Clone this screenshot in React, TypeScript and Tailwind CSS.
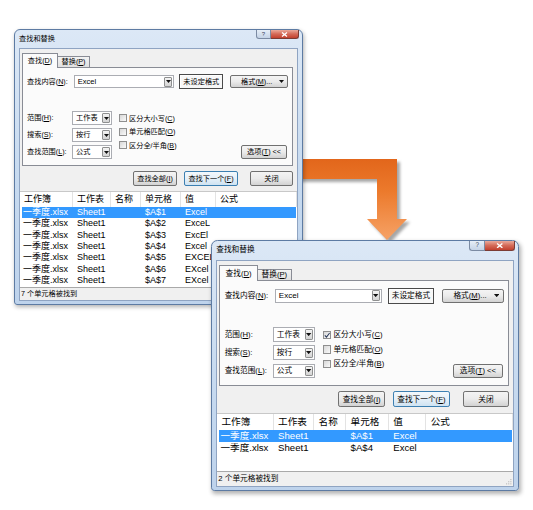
import React from "react";

type Row = { book: string; sheet: string; cell: string; value: string };

const rowsA: Row[] = [
  { book: "一季度.xlsx", sheet: "Sheet1", cell: "$A$1", value: "Excel" },
  { book: "一季度.xlsx", sheet: "Sheet1", cell: "$A$2", value: "ExceL" },
  { book: "一季度.xlsx", sheet: "Sheet1", cell: "$A$3", value: "ExcEl" },
  { book: "一季度.xlsx", sheet: "Sheet1", cell: "$A$4", value: "Excel" },
  { book: "一季度.xlsx", sheet: "Sheet1", cell: "$A$5", value: "EXCEL" },
  { book: "一季度.xlsx", sheet: "Sheet1", cell: "$A$6", value: "EXcel" },
  { book: "一季度.xlsx", sheet: "Sheet1", cell: "$A$7", value: "EXcel" },
];

const rowsB: Row[] = [
  { book: "一季度.xlsx", sheet: "Sheet1", cell: "$A$1", value: "Excel" },
  { book: "一季度.xlsx", sheet: "Sheet1", cell: "$A$4", value: "Excel" },
];

const headers = ["工作簿", "工作表", "名称", "单元格", "值", "公式"];
const headCols = ["w-[53px]", "w-[38px]", "w-[30px]", "w-[40px]", "w-[35px]", "flex-1"];

function K({ k }: { k: string }) {
  return <span className="underline underline-offset-[1px]">{k}</span>;
}

function Tri() {
  return (
    <svg width="5" height="3" viewBox="0 0 5 3">
      <path d="M0 0H5L2.5 3Z" fill="#111" />
    </svg>
  );
}

function DropBtn() {
  return (
    <div className="mr-[1px] flex h-[10px] w-[8px] items-center justify-center rounded-[1px] border border-[#8e8f8f] bg-gradient-to-b from-[#f4f4f4] to-[#d3d3d3]">
      <Tri />
    </div>
  );
}

function Select({ text }: { text: string }) {
  return (
    <div className="flex h-[14px] w-[40px] items-center border border-[#abadb3] bg-white">
      <span className="flex-1 pl-[3px] text-[7.2px] leading-none">{text}</span>
      <DropBtn />
    </div>
  );
}

function Btn({ children, className, primary }: { children: React.ReactNode; className: string; primary?: boolean }) {
  return (
    <div
      className={`flex items-center justify-center rounded-[2px] border text-[7.2px] leading-none ${
        primary
          ? "border-[#3c7fb1] bg-gradient-to-b from-[#f3f8fc] via-[#e6f0f8] to-[#cfe3f2]"
          : "border-[#707070] bg-gradient-to-b from-[#f4f4f4] via-[#ebebeb] to-[#d2d2d2]"
      } ${className}`}
    >
      {children}
    </div>
  );
}

function Check({ checked, children }: { checked?: boolean; children: React.ReactNode }) {
  return (
    <div className="flex h-[13.5px] items-center gap-[2px]">
      <div className="flex h-[8px] w-[8px] items-center justify-center border border-[#8f8f8f] bg-gradient-to-br from-[#d8d8d8] to-[#fafafa]">
        {checked && (
          <svg width="6" height="6" viewBox="0 0 6 6">
            <path d="M0.8 3.2 L2.3 4.8 L5.3 0.9" stroke="#2a3a5a" strokeWidth="1" fill="none" />
          </svg>
        )}
      </div>
      <span className="text-[7.2px] leading-none">{children}</span>
    </div>
  );
}

function Dialog({ rows, height, listHeight, firstChecked, grip }: { rows: Row[]; height: string; listHeight: string; firstChecked?: boolean; grip?: boolean }) {
  return (
    <div
      className={`flex w-[289px] flex-col rounded-t-[6px] rounded-b-[3px] border border-[#5d7ba3] bg-gradient-to-b from-[#dce8f6] via-[#c8dbf0] to-[#bed3ec] px-[4px] pb-[3px] shadow-[1px_2px_4px_rgba(0,0,0,0.3)] ${height}`}
    >
      {/* title bar */}
      <div className="flex h-[18px] shrink-0 items-start justify-between">
        <span className="mt-[5px] text-[7.2px] leading-none text-black">查找和替换</span>
        <div className="-mr-[1px] flex">
          <div className="flex h-[9px] w-[15px] items-center justify-center rounded-bl-[3px] border border-t-0 border-[#7b8ba3] bg-gradient-to-b from-[#e6eef7] to-[#c4d3e6] text-[6px] leading-none text-[#3a4a60]">
            ?
          </div>
          <div className="flex h-[9px] w-[28px] items-center justify-center rounded-br-[3px] border border-l-0 border-t-0 border-[#7b3c35] bg-gradient-to-b from-[#e9a99b] via-[#d46a58] to-[#c2402e]">
            <svg width="7" height="5" viewBox="0 0 7 5">
              <path d="M1 0.5 L6 4.5 M6 0.5 L1 4.5" stroke="#fff" strokeWidth="1.3" />
            </svg>
          </div>
        </div>
      </div>

      {/* client area */}
      <div className="flex flex-1 flex-col border border-[#8fa4c2] bg-[#f0f0f0]">
        {/* tabs */}
        <div className="ml-[2px] mt-[4px] flex h-[14px] items-end">
          <div className="z-10 -mb-px flex h-[15px] w-[36px] items-center justify-center border border-b-0 border-[#898c95] bg-[#fbfbfb] text-[7.2px] leading-none">
            查找(<K k="D" />)
          </div>
          <div className="flex h-[11px] w-[32px] items-center justify-center border border-b-0 border-l-0 border-[#898c95] bg-gradient-to-b from-[#f3f3f3] to-[#e0e0e0] text-[7.2px] leading-none">
            替换(<K k="P" />)
          </div>
        </div>

        {/* tab panel */}
        <div className="ml-[2px] mr-[4px] flex h-[99px] flex-col border border-[#898c95] bg-[#fbfbfb] px-[4px] pt-[6px]">
          <div className="flex h-[15px] items-center">
            <span className="w-[47px] text-[7.2px] leading-none">
              查找内容(<K k="N" />):
            </span>
            <div className="flex h-[13px] w-[101px] items-center border border-[#abadb3] bg-white">
              <span className="flex-1 pl-[3px] text-[7.5px] leading-none">Excel</span>
              <DropBtn />
            </div>
            <div className="ml-[5px] flex h-[15px] w-[44px] items-center justify-center border border-[#4a4a4a] bg-[#f7f7f7] text-[7.2px] leading-none shadow-[inset_1px_1px_0_#fff]">
              未设定格式
            </div>
            <Btn className="ml-[7px] h-[13px] w-[58px] justify-between px-[3px]">
              <span className="flex-1 text-center">
                格式(<K k="M" />)...
              </span>
              <Tri />
            </Btn>
          </div>

          <div className="mt-[22px] flex">
            <div className="flex flex-col gap-[3px]">
              <div className="flex items-center">
                <span className="w-[45px] text-[7.2px] leading-none">
                  范围(<K k="H" />):
                </span>
                <Select text="工作表" />
              </div>
              <div className="flex items-center">
                <span className="w-[45px] text-[7.2px] leading-none">
                  搜索(<K k="S" />):
                </span>
                <Select text="按行" />
              </div>
              <div className="flex items-center">
                <span className="w-[45px] text-[7.2px] leading-none">
                  查找范围(<K k="L" />):
                </span>
                <Select text="公式" />
              </div>
            </div>
            <div className="ml-[7px] flex flex-col pt-[0.5px]">
              <Check checked={firstChecked}>
                区分大小写(<K k="C" />)
              </Check>
              <Check>
                单元格匹配(<K k="O" />)
              </Check>
              <Check>
                区分全/半角(<K k="B" />)
              </Check>
            </div>
            <div className="flex-1" />
            <Btn className="mr-[1px] h-[14px] w-[46px] self-end">
              选项(<K k="T" />)&nbsp;&lt;&lt;
            </Btn>
          </div>
        </div>

        {/* action buttons */}
        <div className="mt-[5px] flex h-[15px] justify-end pr-[4px]">
          <Btn className="h-[15px] w-[44px]">
            查找全部(<K k="I" />)
          </Btn>
          <Btn primary className="ml-[7px] h-[15px] w-[54px]">
            查找下一个(<K k="F" />)
          </Btn>
          <Btn className="ml-[12px] h-[15px] w-[43px]">关闭</Btn>
        </div>

        {/* results list */}
        <div className="mt-[5px] flex flex-1 flex-col border-t border-[#c8c8c8]">
          <div className="flex h-[15px] items-center bg-white text-[9px] leading-none">
            {headers.map((h, i) => (
              <div key={h} className={`${headCols[i]} flex h-full items-center border-r border-[#e3e3e3] pl-[4px]`}>
                {h}
              </div>
            ))}
          </div>
          <div className={`flex flex-col bg-white pl-[2px] pr-[1px] ${listHeight}`}>
            {rows.map((r, i) => (
              <div
                key={r.cell}
                className={`flex h-[11.3px] shrink-0 items-center text-[9px] leading-none ${
                  i === 0 ? "bg-[#3399ff] text-white" : "text-black"
                }`}
              >
                <div className="w-[51px] pl-[1px]">{r.book}</div>
                <div className="w-[38px] pl-[4px]">{r.sheet}</div>
                <div className="w-[30px] pl-[4px]" />
                <div className="w-[40px] pl-[4px]">{r.cell}</div>
                <div className="w-[35px] pl-[4px]">{r.value}</div>
              </div>
            ))}
          </div>
          <div className="flex flex-1 items-center justify-between border-t border-[#a9a9a9] bg-[#f0f0f0] pl-[1px]">
            <span className="text-[7.2px] leading-none">{rows.length} 个单元格被找到</span>
            {grip && (
              <svg width="7" height="7" viewBox="0 0 7 7" className="mr-[1px] self-end">
                <g fill="#b5b5b5">
                  <rect x="5" y="1" width="1" height="1" />
                  <rect x="3" y="3" width="1" height="1" />
                  <rect x="5" y="3" width="1" height="1" />
                  <rect x="1" y="5" width="1" height="1" />
                  <rect x="3" y="5" width="1" height="1" />
                  <rect x="5" y="5" width="1" height="1" />
                </g>
              </svg>
            )}
          </div>
        </div>
      </div>
    </div>
  );
}

export default function App() {
  return (
    <div className="relative h-[510px] w-[533px] overflow-hidden bg-white font-['Liberation_Sans','Noto_Sans_CJK_SC',sans-serif] text-black">
      {/* orange arrow */}
      <svg className="absolute left-[280px] top-[150px]" width="140" height="100" viewBox="0 0 140 100">
        <defs>
          <linearGradient id="ar" x1="0" y1="0" x2="0" y2="1">
            <stop offset="0" stopColor="#e2661b" />
            <stop offset="0.4" stopColor="#ec7a2c" />
            <stop offset="1" stopColor="#f6a266" />
          </linearGradient>
          <filter id="sh" x="-20%" y="-20%" width="140%" height="140%">
            <feGaussianBlur stdDeviation="1.5" />
          </filter>
        </defs>
        <path d="M10 9 H117 V69 H127 L107 90 L87 69 H97 V29 H10 Z" fill="rgba(0,0,0,0.35)" transform="translate(3 3)" filter="url(#sh)" />
        <path d="M10 9 H117 V69 H127 L107 90 L87 69 H97 V29 H10 Z" fill="url(#ar)" />
      </svg>

      <div className="absolute left-[14px] top-[29px]">
        <Dialog rows={rowsA} height="h-[276px]" listHeight="h-[80px]" />
      </div>

      <div className="absolute left-[211px] top-[240px]">
        <div className="[zoom:1.067]">
          <Dialog rows={rowsB} height="h-[235px]" listHeight="h-[39px]" firstChecked grip />
        </div>
      </div>
    </div>
  );
}
